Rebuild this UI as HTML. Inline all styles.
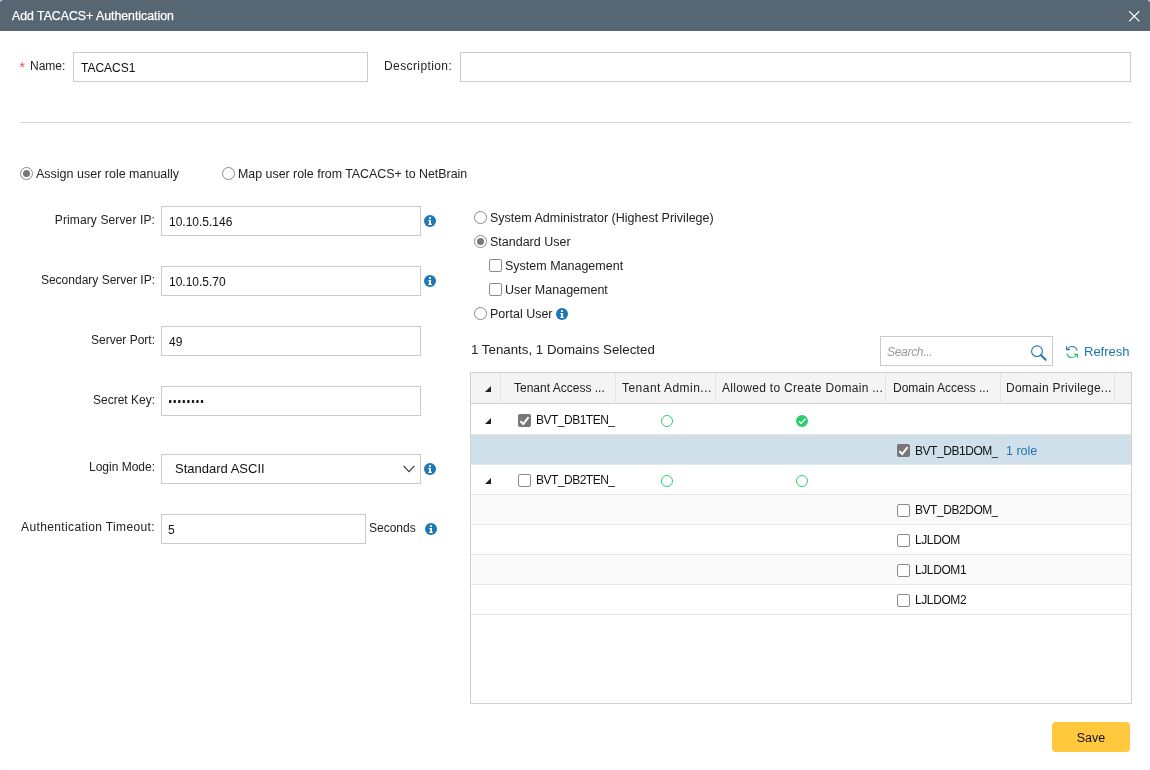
<!DOCTYPE html>
<html><head><meta charset="utf-8">
<style>
*{box-sizing:border-box;margin:0;padding:0}
html,body{width:1150px;height:770px;overflow:hidden;background:#b8b8b8}
body{position:relative;font-family:"Liberation Sans",sans-serif;font-size:12px;color:#222}
.a{position:absolute;white-space:nowrap;line-height:14px}
.hdr{position:absolute;left:0;top:0;width:1150px;height:31px;background:#566673;border-radius:3px 3px 0 0}
.ttl{left:12px;top:9px;color:#fff;font-size:12.3px;line-height:15px;-webkit-text-stroke:0.25px #fff}
.inp{position:absolute;border:1px solid #cacaca;background:#fff;height:30px}
.lbl{text-align:right}
.info{position:absolute;width:12px;height:12px}
.radio{position:absolute;width:13px;height:13px;border:1px solid #8a8a8a;border-radius:50%;background:#fff}
.radio.on::after{content:"";position:absolute;left:2px;top:2px;width:7px;height:7px;border-radius:50%;background:#777}
.cb{position:absolute;width:13px;height:13px;border:1px solid #8a8a8a;border-radius:2px;background:#fff}
.cbs{position:absolute}
.tbl{position:absolute;left:470px;top:372px;width:662px;height:332px;border:1px solid #cfcfcf;background:#fff;overflow:hidden}
.th{position:absolute;left:0;top:0;width:660px;height:31px;background:#f4f4f4;border-bottom:1px solid #cfcfcf}
.vd{position:absolute;top:0;width:1px;background:#e2e2e2}
.row{position:absolute;left:0;width:660px;height:30px;border-bottom:1px solid #e6e6e6}
.tri{position:absolute;width:0;height:0;border-style:solid;border-width:0 0 6px 6px;border-color:transparent transparent #222 transparent}
.gc{position:absolute;width:12px;height:12px;border-radius:50%;border:1.3px solid #2ecc71}
.gf{position:absolute;width:12px;height:12px;border-radius:50%;background:#2ecc71}
#wrap{position:absolute;left:0;top:0;width:1150px;height:770px;will-change:transform;background:#fff;border-radius:3px 3px 1px 1px;overflow:hidden}
</style></head><body><div id="wrap">
<div class="hdr"></div>
<div class="a ttl">Add TACACS+ Authentication</div>
<svg style="position:absolute;left:1129px;top:11px" width="11" height="11" viewBox="0 0 11 11"><path d="M0.6 0.6L9.9 9.9M9.9 0.6L0.6 9.9" stroke="#fff" stroke-width="1.3" stroke-linecap="round"/></svg>

<!-- Name row -->
<div class="a" style="left:19.5px;top:60px;color:#e05a4e;font-size:14px">*</div>
<div class="a" style="left:30px;top:59px">Name:</div>
<div class="inp" style="left:73px;top:52px;width:295px"></div>
<div class="a" style="left:81px;top:61px;color:#111">TACACS1</div>
<div class="a" style="left:384px;top:59px;letter-spacing:0.4px">Description:</div>
<div class="inp" style="left:460px;top:52px;width:671px"></div>
<div style="position:absolute;left:20px;top:122px;width:1111px;height:1px;background:#d4d4d4"></div>

<!-- mode radios -->
<div class="radio on" style="left:20px;top:167px"></div>
<div class="a" style="left:36px;top:167px;font-size:12.5px">Assign user role manually</div>
<div class="radio" style="left:222px;top:167px"></div>
<div class="a" style="left:238px;top:167px;font-size:12.4px">Map user role from TACACS+ to NetBrain</div>

<!-- left form -->
<div class="a lbl" style="left:0;width:155px;top:213px;letter-spacing:0.12px">Primary Server IP:</div>
<div class="inp" style="left:161px;top:206px;width:260px"></div>
<div class="a" style="left:169px;top:215px;color:#111">10.10.5.146</div>

<div class="a lbl" style="left:0;width:155px;top:273px">Secondary Server IP:</div>
<div class="inp" style="left:161px;top:266px;width:260px"></div>
<div class="a" style="left:169px;top:275px;color:#111">10.10.5.70</div>

<div class="a lbl" style="left:0;width:155px;top:333px">Server Port:</div>
<div class="inp" style="left:161px;top:326px;width:260px"></div>
<div class="a" style="left:169px;top:335px;color:#111">49</div>

<div class="a lbl" style="left:0;width:155px;top:393px">Secret Key:</div>
<div class="inp" style="left:161px;top:386px;width:260px"></div>
<svg style="position:absolute;left:169px;top:400px" width="40" height="3" viewBox="0 0 40 3"><rect x="0.0" y="0" width="2.4" height="3" rx="0.8" fill="#111"/><rect x="4.5" y="0" width="2.4" height="3" rx="0.8" fill="#111"/><rect x="9.1" y="0" width="2.4" height="3" rx="0.8" fill="#111"/><rect x="13.6" y="0" width="2.4" height="3" rx="0.8" fill="#111"/><rect x="18.2" y="0" width="2.4" height="3" rx="0.8" fill="#111"/><rect x="22.8" y="0" width="2.4" height="3" rx="0.8" fill="#111"/><rect x="27.3" y="0" width="2.4" height="3" rx="0.8" fill="#111"/><rect x="31.8" y="0" width="2.4" height="3" rx="0.8" fill="#111"/></svg>

<div class="a lbl" style="left:0;width:155px;top:460px">Login Mode:</div>
<div class="inp" style="left:161px;top:454px;width:260px"></div>
<div class="a" style="left:175px;top:461px;color:#111;font-size:13px;line-height:15px">Standard ASCII</div>
<svg style="position:absolute;left:403px;top:465px" width="12" height="8" viewBox="0 0 12 8"><path d="M0.6 0.8L6 6.6L11.4 0.8" fill="none" stroke="#333" stroke-width="1.1"/></svg>

<div class="a lbl" style="left:0;width:155px;top:520px;letter-spacing:0.37px">Authentication Timeout:</div>
<div class="inp" style="left:161px;top:514px;width:205px"></div>
<div class="a" style="left:168px;top:523px;color:#111">5</div>
<div class="a" style="left:369px;top:521px">Seconds</div>

<!-- info icons -->
<svg class="info" style="left:424px;top:215px" viewBox="0 0 12 12"><circle cx="6" cy="6" r="6" fill="#1f77b4"/><rect x="5" y="2.3" width="2" height="1.7" fill="#fff"/><path d="M4.4 5h2.6v3.8h0.8v1.2H4.4V8.8h0.8V6.2H4.4z" fill="#fff"/></svg>
<svg class="info" style="left:424px;top:275px" viewBox="0 0 12 12"><circle cx="6" cy="6" r="6" fill="#1f77b4"/><rect x="5" y="2.3" width="2" height="1.7" fill="#fff"/><path d="M4.4 5h2.6v3.8h0.8v1.2H4.4V8.8h0.8V6.2H4.4z" fill="#fff"/></svg>
<svg class="info" style="left:424px;top:463px" viewBox="0 0 12 12"><circle cx="6" cy="6" r="6" fill="#1f77b4"/><rect x="5" y="2.3" width="2" height="1.7" fill="#fff"/><path d="M4.4 5h2.6v3.8h0.8v1.2H4.4V8.8h0.8V6.2H4.4z" fill="#fff"/></svg>
<svg class="info" style="left:425px;top:523px" viewBox="0 0 12 12"><circle cx="6" cy="6" r="6" fill="#1f77b4"/><rect x="5" y="2.3" width="2" height="1.7" fill="#fff"/><path d="M4.4 5h2.6v3.8h0.8v1.2H4.4V8.8h0.8V6.2H4.4z" fill="#fff"/></svg>

<!-- right: roles -->
<div class="radio" style="left:474px;top:211px"></div>
<div class="a" style="left:490px;top:211px;font-size:12.5px">System Administrator (Highest Privilege)</div>
<div class="radio on" style="left:474px;top:235px"></div>
<div class="a" style="left:490px;top:235px;font-size:12.5px">Standard User</div>
<div class="cb" style="left:489px;top:259px"></div>
<div class="a" style="left:505px;top:259px;font-size:12.5px">System Management</div>
<div class="cb" style="left:489px;top:283px"></div>
<div class="a" style="left:505px;top:283px;font-size:12.5px">User Management</div>
<div class="radio" style="left:474px;top:307px"></div>
<div class="a" style="left:490px;top:307px;font-size:12.5px">Portal User</div>
<svg class="info" style="left:556px;top:308px" viewBox="0 0 12 12"><circle cx="6" cy="6" r="6" fill="#1f77b4"/><rect x="5" y="2.3" width="2" height="1.7" fill="#fff"/><path d="M4.4 5h2.6v3.8h0.8v1.2H4.4V8.8h0.8V6.2H4.4z" fill="#fff"/></svg>

<div class="a" style="left:471px;top:342px;font-size:13.3px;line-height:15px">1 Tenants, 1 Domains Selected</div>

<!-- search -->
<div class="inp" style="left:880px;top:336px;width:173px"></div>
<div class="a" style="left:887px;top:345px;color:#9a9a9a;font-style:italic;letter-spacing:-0.3px">Search...</div>
<svg style="position:absolute;left:1030px;top:344px" width="18" height="18" viewBox="0 0 18 18"><circle cx="7" cy="7.2" r="5.4" fill="none" stroke="#2b7bb9" stroke-width="1.15"/><path d="M10.9 11.1L15.6 15.8" stroke="#2b7bb9" stroke-width="2.1" stroke-linecap="round"/></svg>
<svg style="position:absolute;left:1065px;top:345px" width="14" height="14" viewBox="0 0 14 14"><path d="M12.2 5.5A5.4 5.4 0 0 0 2.4 4" fill="none" stroke="#2b7bb9" stroke-width="1.1"/><path d="M1.5 1.2V4.6H4.9" fill="none" stroke="#2b7bb9" stroke-width="1.1"/><path d="M1.8 8.5A5.4 5.4 0 0 0 11.6 10" fill="none" stroke="#2ebd6b" stroke-width="1.1"/><path d="M12.5 12.8V9.4H9.1" fill="none" stroke="#2ebd6b" stroke-width="1.1"/></svg>
<div class="a" style="left:1084px;top:344px;color:#1f74ad;font-size:13px;line-height:15px">Refresh</div>

<!-- table -->
<div class="tbl">
  <div class="th"></div>
  <div class="row" style="top:31px;height:31px;background:#fff"></div>
  <div class="row" style="top:62px;background:#cfe0ea;border-bottom-color:#dfe8ee"></div>
  <div class="row" style="top:92px;background:#fff"></div>
  <div class="row" style="top:122px;background:#fafafa"></div>
  <div class="row" style="top:152px;background:#fff"></div>
  <div class="row" style="top:182px;background:#fafafa"></div>
  <div class="row" style="top:212px;background:#fff"></div>
  <div class="vd" style="left:29px;height:31px;background:#e4e4e4"></div>
  <div class="vd" style="left:144px;height:31px;background:#e4e4e4"></div>
  <div class="vd" style="left:244px;height:31px;background:#e4e4e4"></div>
  <div class="vd" style="left:414px;height:31px;background:#e4e4e4"></div>
  <div class="vd" style="left:529px;height:31px;background:#e4e4e4"></div>
  <div class="vd" style="left:643px;height:31px;background:#e4e4e4"></div>
</div>
<div class="tri" style="left:485px;top:386px"></div>
<div class="a" style="left:514px;top:381px">Tenant Access ...</div>
<div class="a" style="left:622px;top:381px;letter-spacing:0.47px">Tenant Admin...</div>
<div class="a" style="left:722px;top:381px;letter-spacing:0.3px">Allowed to Create Domain ...</div>
<div class="a" style="left:893px;top:381px">Domain Access ...</div>
<div class="a" style="left:1006px;top:381px;letter-spacing:0.26px">Domain Privilege...</div>

<div class="tri" style="left:485px;top:418px"></div>
<svg class="cbs" style="left:518px;top:414px" width="13" height="13" viewBox="0 0 13 13"><rect x="0" y="0" width="13" height="13" rx="2" fill="#777"/><path d="M2.3 7.1L5.2 10L10.6 3.2" fill="none" stroke="#fff" stroke-width="2"/></svg>
<div class="a" style="left:536px;top:413px;color:#111;width:79px;overflow:hidden;letter-spacing:-0.5px">BVT_DB1TEN_abc</div>
<div class="gc" style="left:661px;top:415px"></div>
<svg style="position:absolute;left:796px;top:415px" width="12" height="12" viewBox="0 0 12 12"><circle cx="6" cy="6" r="6" fill="#2ecc71"/><path d="M2.9 6.3L5.1 8.4L9.5 3.7" fill="none" stroke="#fff" stroke-width="1.3"/></svg>

<svg class="cbs" style="left:897px;top:444px" width="13" height="13" viewBox="0 0 13 13"><rect x="0" y="0" width="13" height="13" rx="2" fill="#777"/><path d="M2.3 7.1L5.2 10L10.6 3.2" fill="none" stroke="#fff" stroke-width="2"/></svg>
<div class="a" style="left:915px;top:444px;color:#111;width:83px;overflow:hidden;letter-spacing:-0.45px">BVT_DB1DOM_abc</div>
<div class="a" style="left:1006px;top:444px;color:#1f74ad;font-size:12.5px">1 role</div>

<div class="tri" style="left:485px;top:478px"></div>
<div class="cb" style="left:518px;top:474px"></div>
<div class="a" style="left:536px;top:473px;color:#111;width:79px;overflow:hidden;letter-spacing:-0.5px">BVT_DB2TEN_abc</div>
<div class="gc" style="left:661px;top:475px"></div>
<div class="gc" style="left:796px;top:475px"></div>

<div class="cb" style="left:897px;top:504px"></div>
<div class="a" style="left:915px;top:503px;color:#111;width:83px;overflow:hidden;letter-spacing:-0.45px">BVT_DB2DOM_abc</div>
<div class="cb" style="left:897px;top:534px"></div>
<div class="a" style="left:915px;top:533px;color:#111;letter-spacing:-0.4px">LJLDOM</div>
<div class="cb" style="left:897px;top:564px"></div>
<div class="a" style="left:915px;top:563px;color:#111;letter-spacing:-0.4px">LJLDOM1</div>
<div class="cb" style="left:897px;top:594px"></div>
<div class="a" style="left:915px;top:593px;color:#111;letter-spacing:-0.4px">LJLDOM2</div>

<!-- save -->
<div style="position:absolute;left:1052px;top:722px;width:78px;height:30px;background:#ffc83d;border-radius:4px"></div>
<div class="a" style="left:1052px;width:78px;text-align:center;top:731px;color:#111;font-size:12.5px">Save</div>
</div></body></html>
